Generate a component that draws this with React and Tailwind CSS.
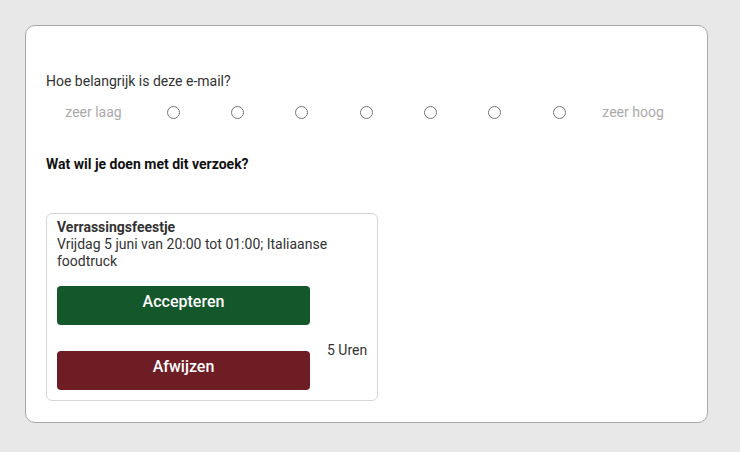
export default function App() {
  const options = [1, 2, 3, 4, 5, 6, 7];

  return (
    <div className="min-h-[452px] w-[740px] bg-[#e8e8e8] px-[25px] pt-[25px] font-['Roboto',sans-serif] text-[#333]">
      <div className="h-[398px] w-[683px] rounded-[10px] border border-[#a9a9a9] bg-white pl-[20px] pr-[20px] pt-[45px]">
        <p className="text-[14px] leading-[20px]">Hoe belangrijk is deze e-mail?</p>

        <div className="mt-[9px] flex h-[24px] items-center text-[14px]">
          <span className="w-[95px] text-center text-[#aaa]">zeer laag</span>
          {options.map((n) => (
            <span key={n} className="flex w-[64.33px] justify-center">
              <span className="h-[13px] w-[13px] rounded-full border border-[#767676]" />
            </span>
          ))}
          <span className="pl-[11px] text-[#aaa]">zeer hoog</span>
        </div>

        <p className="mt-[30px] text-[14px] font-bold leading-[20px] text-[#111]">
          Wat wil je doen met dit verzoek?
        </p>

        <div className="mt-[39px] w-[332px] rounded-[6px] border border-[#d6d6d6] px-[10px] pb-[10px] pt-[5px]">
          <p className="text-[14px] font-bold leading-[17px]">Verrassingsfeestje</p>
          <p className="text-[14px] leading-[17px]">
            Vrijdag 5 juni van 20:00 tot 01:00; Italiaanse foodtruck
          </p>

          <div className="mt-[16px] flex">
            <div className="flex w-[253px] shrink-0 flex-col gap-[26px]">
              <button className="h-[39px] rounded-[4px] bg-[#14572a] pb-[8px] text-[16px] font-medium text-white">
                Accepteren
              </button>
              <button className="h-[39px] rounded-[4px] bg-[#6f1d24] pb-[8px] text-[16px] font-medium text-white">
                Afwijzen
              </button>
            </div>
            <span className="ml-[17px] mt-[56px] whitespace-nowrap text-[14px] leading-[17px]">5 Uren</span>
          </div>
        </div>
      </div>
    </div>
  );
}
